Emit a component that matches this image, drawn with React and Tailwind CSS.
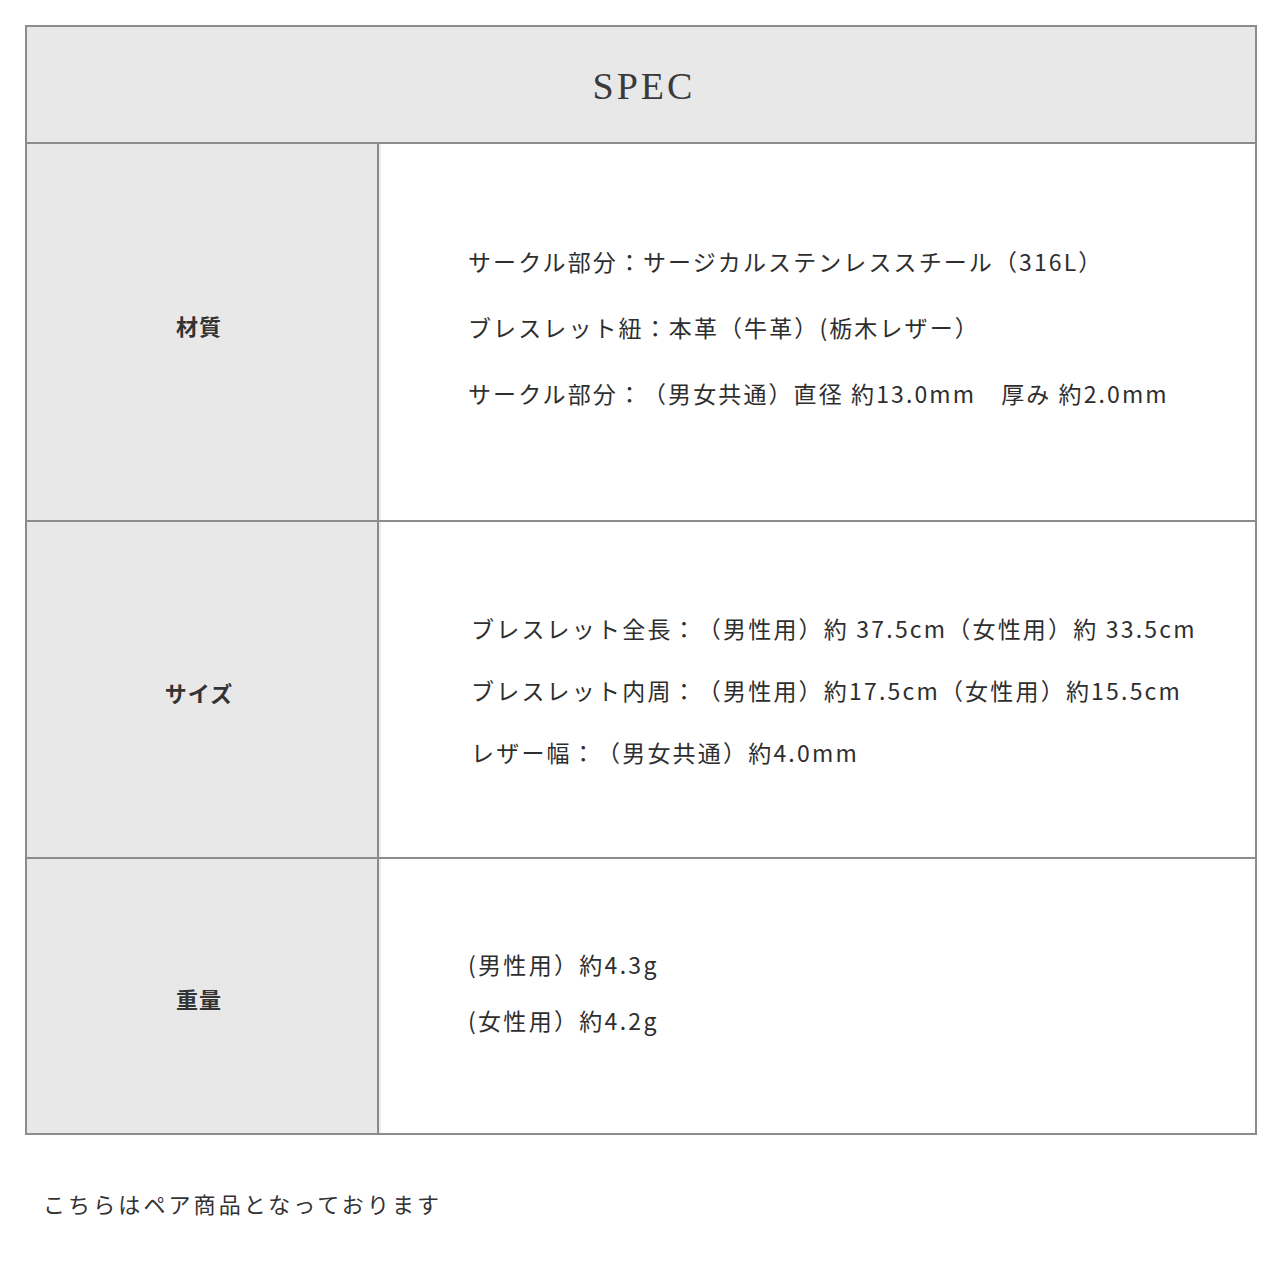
export default function App() {
  const jp = { fontFamily: '"Noto Sans CJK JP", "Noto Sans", sans-serif' };
  const Row = ({ label, h, lines, gap, pl, size, labelShift }) => (
    <div className="flex border-t-2 border-[#8c8c8c]" style={{ height: h }}>
      <div className="w-[352px] shrink-0 bg-[#e8e8e8] border-r-2 border-[#8c8c8c] flex items-center justify-center">
        <span className={`text-[22px] font-bold text-[#333] tracking-[1px] pr-[6px] ${labelShift}`}>{label}</span>
      </div>
      <div className={`flex-1 bg-white border-l-2 border-[#ececec] flex flex-col justify-center ${pl}`}>
        <div className={`flex flex-col ${gap}`}>
          {lines.map((l, i) => (
            <div key={i} className={`${size} leading-[32px] text-[#2e2e2e] whitespace-pre [text-spacing-trim:space-all]`}>{l}</div>
          ))}
        </div>
      </div>
    </div>
  );
  return (
    <div className="w-[1280px] h-[1280px] bg-white pt-[25px] pl-[25px]" style={jp}>
      <div className="w-[1232px] border-2 border-[#8c8c8c] flex flex-col">
        <div className="h-[115px] bg-[#e8e8e8] flex items-center justify-center pt-[3px]">
          <span className="text-[38px] text-[#3a3a3a] tracking-[3px] pl-[6px]" style={{ fontFamily: '"Liberation Serif", "DejaVu Serif", serif' }}>SPEC</span>
        </div>
        <Row label="材質" h={378} gap="gap-[34px]" pl="pl-[87px] pb-[10px]" size="text-[23px] tracking-[2.1px]" labelShift="mb-[14px]" lines={[
          "サークル部分：サージカルステンレススチール（316L）",
          "ブレスレット紐：本革（牛革）(栃木レザー）",
          "サークル部分：（男女共通）直径 約13.0mm　厚み 約2.0mm",
        ]} />
        <Row label="サイズ" h={337} gap="gap-[30px]" pl="pl-[90px]" size="text-[23px] tracking-[2.2px]" labelShift="mt-[6px]" lines={[
          "ブレスレット全長：（男性用）約 37.5cm（女性用）約 33.5cm",
          "ブレスレット内周：（男性用）約17.5cm（女性用）約15.5cm",
          "レザー幅：（男女共通）約4.0mm",
        ]} />
        <Row label="重量" h={276} gap="gap-[24px]" pl="pl-[87px] pb-[8px]" size="text-[23px] tracking-[2.3px]" labelShift="mt-[4px]" lines={[
          "(男性用）約4.3g",
          "(女性用）約4.2g",
        ]} />
      </div>
      <div className="mt-[52px] pl-[18px] text-[22px] text-[#333] tracking-[3.1px]">こちらはペア商品となっております</div>
    </div>
  );
}
